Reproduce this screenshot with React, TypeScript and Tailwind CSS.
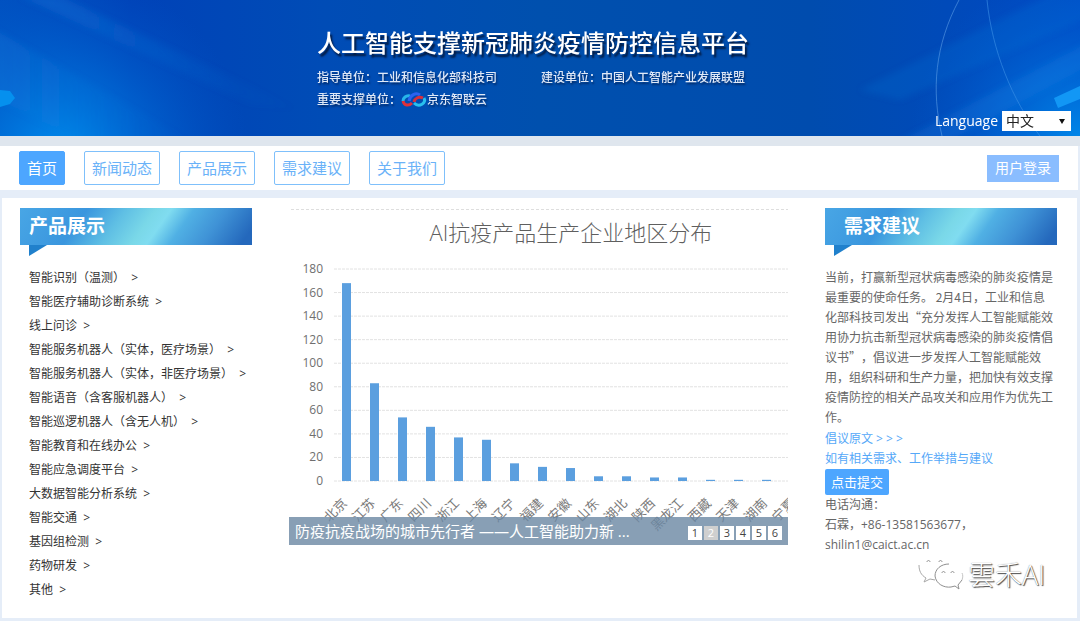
import { useState } from "react";

const navItems = ["首页", "新闻动态", "产品展示", "需求建议", "关于我们"];

const products = [
	"智能识别（温测）",
	"智能医疗辅助诊断系统",
	"线上问诊",
	"智能服务机器人（实体，医疗场景）",
	"智能服务机器人（实体，非医疗场景）",
	"智能语音（含客服机器人）",
	"智能巡逻机器人（含无人机）",
	"智能教育和在线办公",
	"智能应急调度平台",
	"大数据智能分析系统",
	"智能交通",
	"基因组检测",
	"药物研发",
	"其他",
];

const regions = [
	{ name: "北京", value: 168 },
	{ name: "江苏", value: 83 },
	{ name: "广东", value: 54 },
	{ name: "四川", value: 46 },
	{ name: "浙江", value: 37 },
	{ name: "上海", value: 35 },
	{ name: "辽宁", value: 15 },
	{ name: "福建", value: 12 },
	{ name: "安徽", value: 11 },
	{ name: "山东", value: 4 },
	{ name: "湖北", value: 4 },
	{ name: "陕西", value: 3 },
	{ name: "黑龙江", value: 3 },
	{ name: "西藏", value: 1 },
	{ name: "天津", value: 1 },
	{ name: "湖南", value: 1 },
	{ name: "宁夏", value: 0 },
];

const ticks = [0, 20, 40, 60, 80, 100, 120, 140, 160, 180];

const toY = (value: number) => 273 - (value * 212) / 180;

function HeaderArt() {
	return (
		<svg
			className="absolute inset-0 w-full h-full"
			viewBox="0 0 1080 136"
			preserveAspectRatio="none"
			aria-hidden="true"
		>
			<defs>
				<linearGradient id="base" x1="0" y1="0" x2="1" y2="0">
					<stop offset="0" stopColor="#0050c0" />
					<stop offset="0.12" stopColor="#0042b8" />
					<stop offset="0.3" stopColor="#004cb6" />
					<stop offset="0.5" stopColor="#0050ae" />
					<stop offset="0.75" stopColor="#004cae" />
					<stop offset="1" stopColor="#0048c4" />
				</linearGradient>
				<radialGradient id="glowLeft" cx="60" cy="160" r="190" gradientUnits="userSpaceOnUse">
					<stop offset="0" stopColor="#0090f0" />
					<stop offset="0.4" stopColor="#0074dc" stopOpacity="0.7" />
					<stop offset="1" stopColor="#0058c8" stopOpacity="0" />
				</radialGradient>
				<radialGradient id="glowRight" cx="1080" cy="140" r="170" gradientUnits="userSpaceOnUse">
					<stop offset="0" stopColor="#0088ea" />
					<stop offset="0.5" stopColor="#006cd8" stopOpacity="0.6" />
					<stop offset="1" stopColor="#0058c8" stopOpacity="0" />
				</radialGradient>
				<linearGradient id="ray" x1="0" y1="0" x2="1" y2="0">
					<stop offset="0" stopColor="#1a80e0" stopOpacity="0.3" />
					<stop offset="1" stopColor="#1a80e0" stopOpacity="0" />
				</linearGradient>
				<filter id="soft" filterUnits="userSpaceOnUse" x="-60" y="-60" width="1200" height="260">
					<feGaussianBlur stdDeviation="3" />
				</filter>
			</defs>
			<rect width="1080" height="136" fill="url(#base)" />
			<rect width="1080" height="136" fill="url(#glowLeft)" />
			<rect width="1080" height="136" fill="url(#glowRight)" />
			<g filter="url(#soft)">
				<path d="M20 -4H60L300 110L250 104Z" fill="url(#ray)" />
				<path d="M-40 10L200 146H90L-40 80Z" fill="url(#ray)" />
				<path d="M900 100L1100 12V-10H1060L860 90Z" fill="#1a78dc" opacity="0.2" />
				<path d="M940 146L1100 60V36L890 146Z" fill="#1a90f0" opacity="0.18" />
			</g>
			<path d="M0 90L10 91L15 98L10 104L0 107Z" fill="#0590ee" />
			<path d="M1054 98L1080 86V99L1058 108Z" fill="#1297f5" />
			<path d="M959 0C935 45 931 90 942 136" fill="none" stroke="#5b9ee6" strokeOpacity="0.6" />
			<path d="M987 0C992 50 1012 100 1040 136" fill="none" stroke="#3d93e8" strokeOpacity="0.6" />
		</svg>
	);
}

function CloudLogo() {
	return (
		<svg width="26" height="18" viewBox="0 0 26 18" fill="none" strokeWidth="3" aria-hidden="true">
			<path d="M9 5C5 4 2 7 2 10" stroke="#27b6ea" />
			<path d="M2 10C3 15 8 15 11 12" stroke="#e0303a" />
			<path d="M8 10C9 4 15 1 19 4" stroke="#2b62f0" />
			<path d="M13 11C14 7 18 5 22 7" stroke="#d5303e" />
			<path d="M23 7C26 12 18 17 13 12" stroke="#28c0ee" />
		</svg>
	);
}

function PanelTitle({ text, indent }: { text: string; indent: string }) {
	return (
		<div className="relative">
			<svg
				className="absolute inset-0 w-full h-12"
				viewBox="0 0 232 48"
				preserveAspectRatio="none"
				aria-hidden="true"
			>
				<defs>
					<linearGradient
						id="panel"
						gradientUnits="userSpaceOnUse"
						x1="20"
						y1="-40"
						x2="190"
						y2="80"
					>
						<stop offset="0" stopColor="#4aa8e6" />
						<stop offset="0.3" stopColor="#3a96de" />
						<stop offset="0.45" stopColor="#5fbfe4" />
						<stop offset="0.57" stopColor="#7ad8e8" />
						<stop offset="0.63" stopColor="#80dcf0" />
						<stop offset="0.72" stopColor="#50b0e4" />
						<stop offset="0.85" stopColor="#3f92d6" />
						<stop offset="1" stopColor="#2468bc" />
					</linearGradient>
				</defs>
				<path d="M0 0H232V37H0Z" fill="url(#panel)" />
				<path d="M9 37H27L9 48Z" fill="#2080cc" />
			</svg>
			<h2 className={`relative h-[37px] leading-[37px] text-[19px] font-bold text-white ${indent}`}>
				{text}
			</h2>
		</div>
	);
}

function RegionChart() {
	return (
		<svg
			className="block w-full"
			viewBox="0 0 499 337"
			role="img"
			aria-label="AI抗疫产品生产企业地区分布"
		>
			<line x1="2" x2="499" y1="1.5" y2="1.5" stroke="#dedede" strokeDasharray="3 2" />
			<text x="282" y="33" textAnchor="middle" fontSize="22" fontWeight="300" fill="#5f5f5f">
				AI抗疫产品生产企业地区分布
			</text>
			{ticks.map((tick) => (
				<g key={tick}>
					<line
						x1="45"
						x2="499"
						y1={toY(tick)}
						y2={toY(tick)}
						stroke="#e2e2e2"
						strokeDasharray="3 1"
					/>
					<text x="34" y={toY(tick) + 4} textAnchor="end" fontSize="12" fill="#6f6f6f">
						{tick}
					</text>
				</g>
			))}
			{regions.map((region, i) => (
				<g key={region.name}>
					<rect
						x={53 + i * 28}
						y={toY(region.value)}
						width="9"
						height={273 - toY(region.value)}
						fill="#5b9fdf"
					/>
					<text
						textAnchor="end"
						fontSize="13"
						fill="#7a7a7a"
						transform={`translate(${59 + i * 28} 296) rotate(-45)`}
					>
						{region.name}
					</text>
				</g>
			))}
		</svg>
	);
}

function Carousel() {
	const [page, setPage] = useState(2);

	return (
		<section className="relative flex-1 min-w-0">
			<RegionChart />
			<div className="absolute inset-x-0 bottom-0 h-7 flex items-center justify-between px-1.5 bg-[#6a87a3]/80">
				<a href="#news" className="text-[15px] leading-7 text-white truncate">
					防疫抗疫战场的城市先行者 ——人工智能助力新 ...
				</a>
				<div className="flex gap-0.5 pt-1">
					{[1, 2, 3, 4, 5, 6].map((n) => (
						<button
							key={n}
							type="button"
							onClick={() => setPage(n)}
							className={
								n === page
									? "w-3.5 h-3.5 text-[11px] leading-3.5 bg-[#cfcfcf] text-white"
									: "w-3.5 h-3.5 text-[11px] leading-3.5 bg-white text-[#444]"
							}
						>
							{n}
						</button>
					))}
				</div>
			</div>
		</section>
	);
}

function Watermark() {
	return (
		<div className="flex items-center justify-end gap-1 pt-0.5 pr-3">
			<svg width="46" height="36" viewBox="0 0 46 36" fill="none" stroke="#8f8f8f" aria-hidden="true">
				<path d="M1 8C1 14 3 18 8 21L6 25L12 22L17 23" stroke="#a8a8a8" />
				<path d="M31 7C23 7 17 12 17 19C18 27 26 31 33 30L37 29L41 32L40 28L44 23" />
				<path d="M44 23C45 20 45 18 44 16" stroke="#c4c4c4" />
				<path d="M9 5C9 3 12 3 12 5M21 5C21 3 24 3 24 5M24 16C24 14 27 14 27 16M33 16C33 14 36 14 36 16" />
			</svg>
			<span className="text-[27px] leading-9 font-light text-white [text-shadow:1px_1px_1px_#444,0_0_1px_#777]">
				雲禾AI
			</span>
		</div>
	);
}

export default function App() {
	return (
		<div
			lang="zh-CN"
			className="bg-[#e5edf8] pb-[3px] font-['Open_Sans','Noto_Sans_CJK_SC',sans-serif]"
		>
			<header className="relative h-[136px] flex justify-center pr-3.5 text-white">
				<HeaderArt />
				<div className="relative pt-[27px]">
					<h1 className="text-2xl leading-8 font-medium [text-shadow:2px_3px_2px_#031a40]">
						人工智能支撑新冠肺炎疫情防控信息平台
					</h1>
					<div className="text-xs font-medium text-[#dfe9f8] [text-shadow:1px_2px_2px_#032a66]">
						<div className="flex gap-11 pt-[7px] leading-6">
							<p>指导单位：工业和信息化部科技司</p>
							<p>建设单位：中国人工智能产业发展联盟</p>
						</div>
						<div className="flex items-center leading-5">
							<p>重要支撑单位：</p>
							<CloudLogo />
							<p>京东智联云</p>
						</div>
					</div>
				</div>
				<div className="absolute right-[9px] bottom-[5px] flex items-center gap-1">
					<label htmlFor="language" className="text-sm">
						Language
					</label>
					<div className="relative">
						<select
							id="language"
							className="block w-[69px] h-5 pl-1 appearance-none bg-white text-sm leading-5 text-[#222]"
						>
							<option>中文</option>
							<option>English</option>
						</select>
						<svg
							className="absolute right-1.5 top-2 pointer-events-none"
							width="6"
							height="5"
							viewBox="0 0 6 5"
							aria-hidden="true"
						>
							<path d="M0 0H6L3 5Z" fill="#111" />
						</svg>
					</div>
				</div>
			</header>

			<div className="h-2.5 bg-[#dfe6ee]" />

			<nav className="flex items-center h-11 mr-0.5 pl-[19px] pr-[19px] bg-white">
				<div className="flex gap-[19px] text-[15px]">
					{navItems.map((item, i) => (
						<a
							key={item}
							href="#"
							className={
								i === 0
									? "h-[34px] px-[7px] rounded-xs border border-[#4da6ff] bg-[#4da6ff] leading-8 text-white"
									: "h-[34px] px-[7px] rounded-xs border border-[#7fc0fb] leading-8 text-[#6ab2f8]"
							}
						>
							{item}
						</a>
					))}
				</div>
				<button type="button" className="ml-auto h-[27px] px-2 bg-[#8abdff] text-sm text-white">
					用户登录
				</button>
			</nav>

			<main className="flex items-start gap-[37px] mt-2 ml-0.5 mr-[3px] pt-2.5 pl-[18px] pr-5 pb-4 bg-white">
				<aside className="w-[232px] shrink-0">
					<PanelTitle text="产品展示" indent="pl-[9px]" />
					<ul className="pt-[21px] pl-[9px] text-xs leading-6 text-[#333] whitespace-nowrap">
						{products.map((product) => (
							<li key={product}>
								<a href="#">{product}&nbsp; &gt;</a>
							</li>
						))}
					</ul>
				</aside>

				<Carousel />

				<aside className="w-[232px] shrink-0 text-xs leading-5 text-[#666]">
					<PanelTitle text="需求建议" indent="pl-[19px]" />
					<p className="pt-[22px] pb-0.5 pr-0.5 [text-spacing-trim:space-all] font-['Noto_Sans_CJK_SC',sans-serif]">
						当前，打赢新型冠状病毒感染的肺炎疫情是最重要的使命任务。 2月4日，工业和信息化部科技司发出“充分发挥人工智能赋能效用协力抗击新型冠状病毒感染的肺炎疫情倡议书”，倡议进一步发挥人工智能赋能效用，组织科研和生产力量，把加快有效支撑疫情防控的相关产品攻关和应用作为优先工作。
					</p>
					<a href="#" className="block text-[#55a8f8]">
						倡议原文 &gt; &gt; &gt;
					</a>
					<p className="text-[#55a8f8]">如有相关需求、工作举措与建议</p>
					<button
						type="button"
						className="block h-[26px] px-1.5 rounded-xs bg-[#4da6ff] text-[13px] text-white"
					>
						点击提交
					</button>
					<p>电话沟通：</p>
					<p>石霖，+86-13581563677，</p>
					<p>shilin1@caict.ac.cn</p>
					<Watermark />
				</aside>
			</main>
		</div>
	);
}
